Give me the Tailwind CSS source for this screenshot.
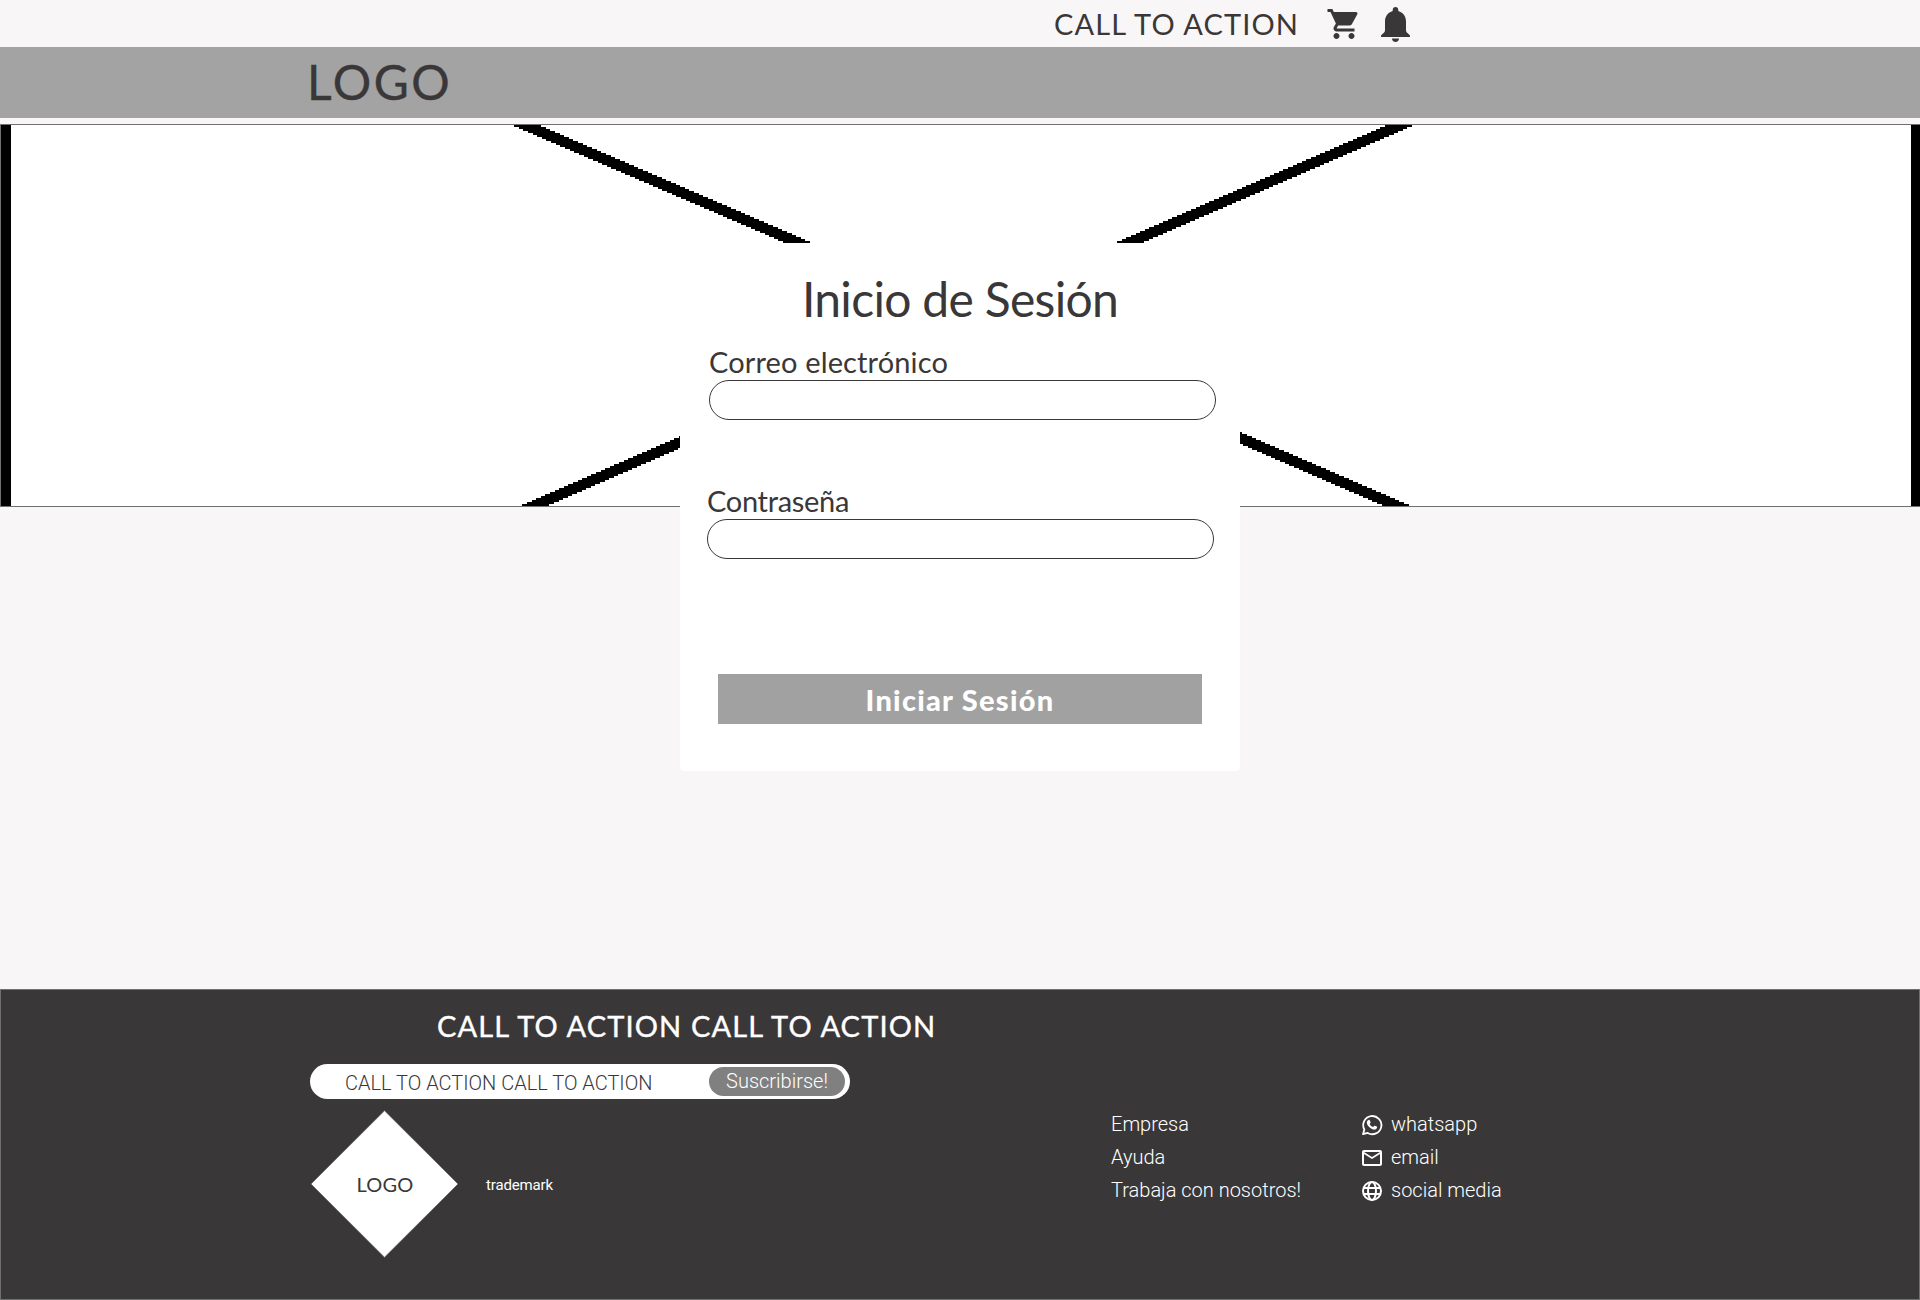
<!DOCTYPE html>
<html lang="es">
<head>
<meta charset="utf-8">
<title>Inicio de Sesión</title>
<script src="https://cdn.jsdelivr.net/npm/@tailwindcss/browser@4"></script>
</head>
<body class="flex h-[1300px] w-[1920px] flex-col overflow-hidden bg-[#f8f6f7] font-['Lato',sans-serif] text-[#3a3738]">

<div class="flex h-[47px] shrink-0 pl-[1054px]">
  <span class="w-[272px] text-[29px] leading-[48px] tracking-[1.120px] whitespace-nowrap">CALL TO ACTION</span>
  <svg class="mt-[6px] size-9" viewBox="0 0 24 24" fill="currentColor"><path d="M7 18c-1.100 0-1.990.9-1.990 2S5.900 22 7 22s2-.9 2-2-.9-2-2-2zM1 2v2h2l3.600 7.590-1.350 2.450c-.16.28-.25.61-.25.96 0 1.100.9 2 2 2h12v-2H7.420c-.14 0-.25-.11-.25-.25l.03-.12.900-1.630h7.450c.75 0 1.410-.41 1.750-1.030l3.580-6.490A1 1 0 0 0 20 4H5.210l-.94-2H1zm16 16c-1.100 0-1.990.9-1.990 2s.89 2 1.990 2 2-.9 2-2-.9-2-2-2z"/></svg>
  <svg class="mt-[6px] ml-[19px] h-[38px] w-[29px]" viewBox="0 0 29 38" fill="currentColor"><path d="M14.500 1c1.700 0 2.800 1.200 2.800 2.900v1C22 6.300 25 10 25 15.500V24c0 1.600.6 2.300 2 3.600l2 1.900V31H0v-1.500l2-1.900c1.400-1.300 2-2 2-3.600v-8.500C4 10 7 6.300 11.700 4.900v-1C11.700 2.200 12.800 1 14.500 1zM11 32.500h7c0 2.100-1.500 3.500-3.500 3.500S11 34.600 11 32.500z"/></svg>
</div>

<header class="h-[71px] shrink-0 bg-[#a3a3a3] pl-[307px] text-5xl leading-[70px] tracking-[2.600px] [-webkit-text-stroke:0.4px_#3a3738]">LOGO</header>

<main class="relative mt-[6px] h-[865px] shrink-0">
  <div class="h-[383px] border-y border-l border-[#707070] bg-white">
    <svg id="hero" class="block h-[381px] w-[1919px]" viewBox="1 125 1919 381" shape-rendering="crispEdges"></svg>
  </div>

  <form class="absolute top-[119px] left-[680px] h-[528px] w-[560px] rounded bg-white">
    <h1 class="h-[109px] text-center text-5xl leading-[111px] tracking-[-0.700px]">Inicio de Sesión</h1>
    <div class="ml-[29px]">
      <label class="block text-[29px] leading-5 tracking-[0.140px]">Correo electrónico</label>
      <div class="mt-2 h-10 w-[507px] rounded-full border border-[#3a3738] bg-white"></div>
    </div>
    <div class="mt-[71px] ml-[27px]">
      <label class="block text-[29px] leading-5 tracking-[-0.300px]">Contraseña</label>
      <div class="mt-2 h-10 w-[507px] rounded-full border border-[#3a3738] bg-white"></div>
    </div>
    <div class="mt-[115px] ml-[38px] h-[50px] w-[484px] bg-[#a1a1a1] text-center text-[29px] leading-[51px] font-black tracking-[1.250px] text-white">Iniciar Sesión</div>
  </form>
</main>

<footer class="h-[311px] shrink-0 border border-[#707070] bg-[#3a3738] text-white">
  <h2 class="pl-[436px] text-[29px] leading-[72px] tracking-[1.140px] [-webkit-text-stroke:0.4px_white]">CALL TO ACTION CALL TO ACTION</h2>
  <div class="mt-[2px] ml-[309px] flex h-[35px] w-[540px] rounded-full bg-white pl-[35px] font-['Roboto',sans-serif] text-xl font-light text-[#3a3738]">
    <span class="w-[364px] leading-[38px]">CALL TO ACTION CALL TO ACTION</span>
    <span class="mt-[3px] h-[29px] w-[136px] rounded-full bg-[#808080] text-center leading-[29px] text-white">Suscribirse!</span>
  </div>
  <div class="mt-[9px] flex font-['Roboto',sans-serif] text-xl leading-[33px] font-light">
    <div class="relative mt-[2px] ml-[309px] h-[148px] w-[149px]">
      <svg class="block size-full" viewBox="0 0 149 148"><path d="M74.500 .7L148 74 74.500 147.300 1 74z" fill="#fff" stroke="#707070" stroke-width="1"/></svg>
      <span class="absolute inset-0 pl-px text-center font-['Lato',sans-serif] leading-[148px] font-normal tracking-[0.200px] text-[#3a3738]">LOGO</span>
    </div>
    <span class="mt-[2px] ml-[27px] w-[625px] text-[15px] leading-[150px] font-normal tracking-[-0.150px]">trademark</span>
    <ul class="w-[249px]">
      <li>Empresa</li>
      <li>Ayuda</li>
      <li>Trabaja con nosotros!</li>
    </ul>
    <ul>
      <li class="flex items-center gap-[7px]">
        <svg class="size-6" viewBox="0 0 24 24" fill="none" stroke="currentColor" stroke-width="1.800"><path d="M3 21.200l1.350-4.700A9.100 9.100 0 1 1 7.700 19.950z" stroke-linejoin="round"/><path fill="currentColor" stroke="none" d="M8.600 6.900c.4-.1.900-.1 1.100.3l.8 1.900c.1.300.1.500-.1.800l-.8 1c.8 1.500 1.900 2.500 3.500 3.200l1-1.200c.2-.3.500-.3.800-.2l1.800.9c.4.200.5.400.4.900-.2 1.300-1.500 2.200-2.800 2.100-3.700-.5-7.300-4-7.500-7.200 0-1.100.8-2.300 1.800-2.500z"/></svg>
        whatsapp</li>
      <li class="flex items-center gap-[7px]">
        <svg class="size-6" viewBox="0 0 24 24" fill="currentColor"><path d="M22 6c0-1.100-.9-2-2-2H4c-1.100 0-2 .9-2 2v12c0 1.100.9 2 2 2h16c1.100 0 2-.9 2-2V6zm-2 0l-8 5-8-5h16zm0 12H4V8l8 5 8-5v10z"/></svg>
        email</li>
      <li class="flex items-center gap-[7px]">
        <svg class="size-6" viewBox="0 0 24 24" fill="none" stroke="currentColor" stroke-width="2"><circle cx="12" cy="12" r="9"/><ellipse cx="12" cy="12" rx="4" ry="9"/><path d="M3.500 9h17M3.500 15h17"/></svg>
        social media</li>
    </ul>
  </div>
</footer>

<script>
// Crossed-box placeholder: side bars plus diagonals drawn as stepped 2px rows.
const rows = [];
const rect = (x, y, w, h) => rows.push(`<rect x="${x}" y="${y}" width="${w}" height="${h}"/>`);
rect(1, 125, 10, 381);
rect(1911, 125, 9, 381);
const band = (y, left) => rect(Math.round(left), y, 27, 2);
for (let y = 125; y < 245; y += 2) {
  band(y, 514 + 2.32 * (y - 125));
  band(y, 1385 - 2.31 * (y - 125));
}
for (let y = 426; y < 506; y += 2) {
  band(y, 520 + 2.30 * (505 - y));
  band(y, 1384 - 2.31 * (505 - y));
}
document.getElementById('hero').innerHTML = rows.join('');
</script>
</body>
</html>
